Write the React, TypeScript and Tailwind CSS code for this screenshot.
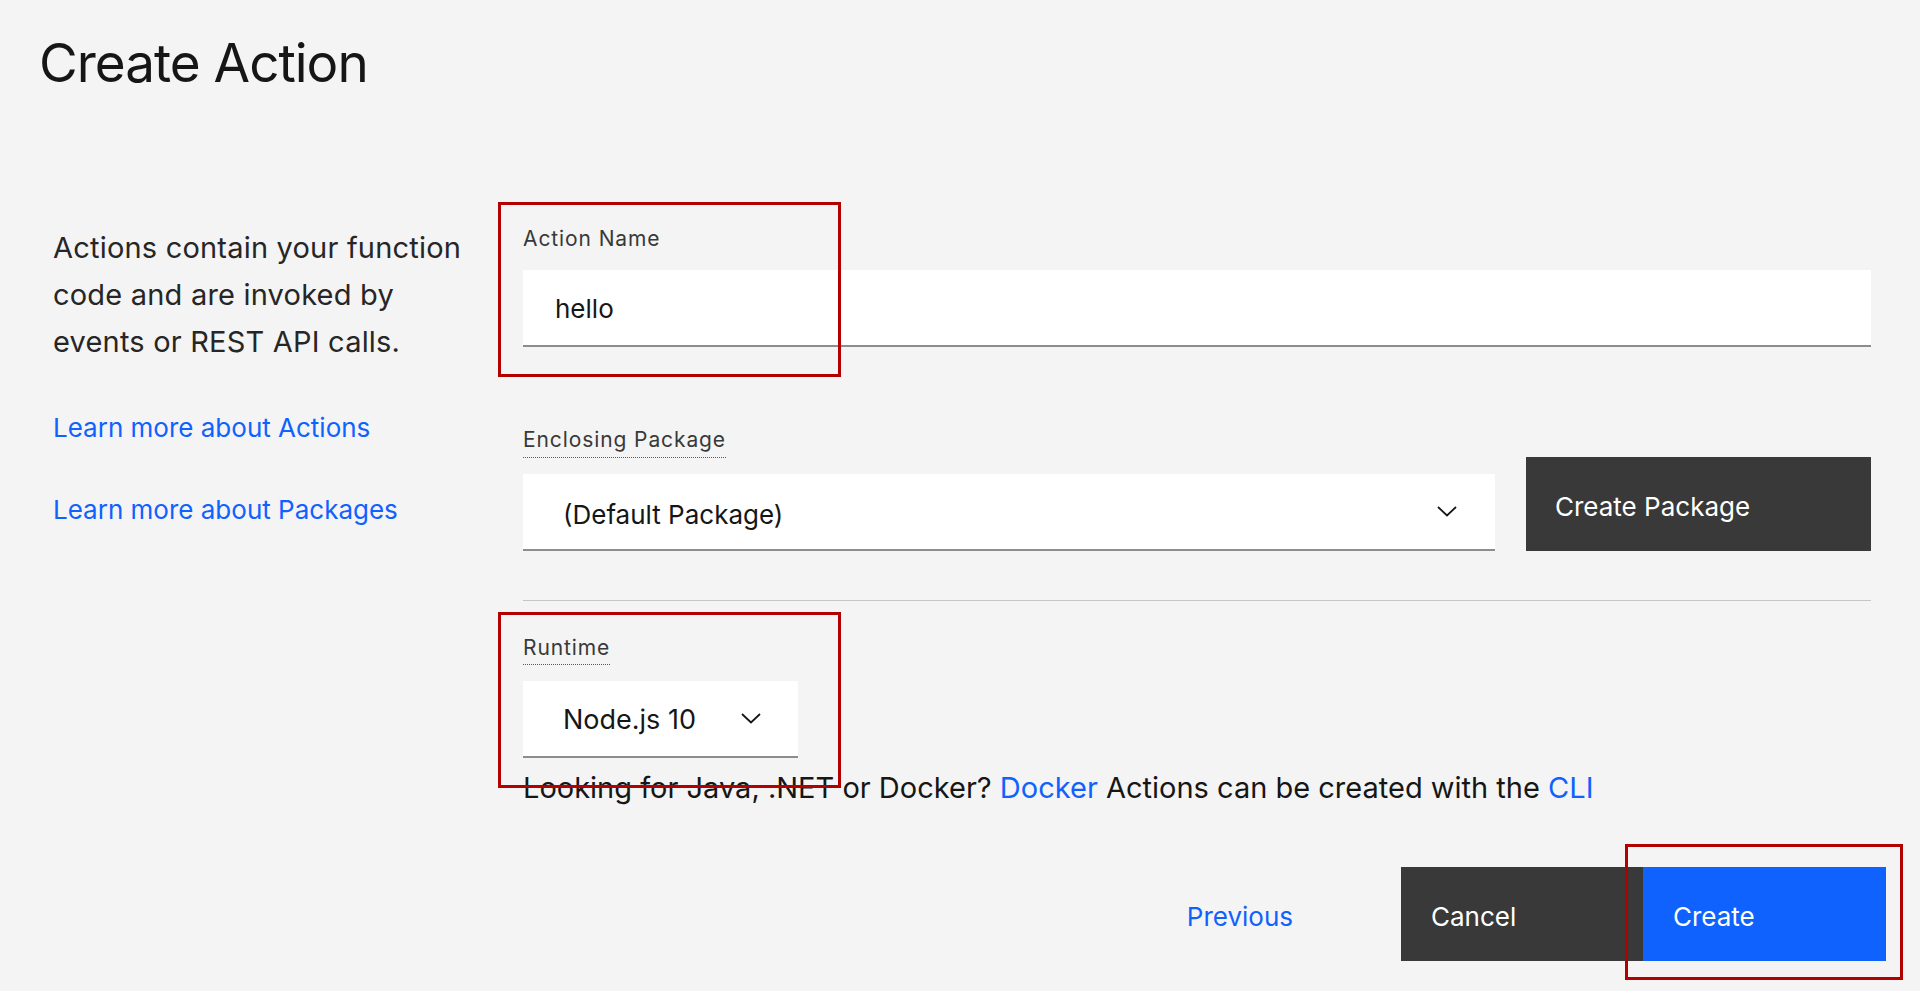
import React from "react";

const Chevron = () => (
  <svg width="20" height="11" viewBox="0 0 20 11" fill="none">
    <polyline points="1,1 10,9.5 19,1" stroke="#161616" strokeWidth="1.8" fill="none" />
  </svg>
);

export default function App() {
  return (
    <div
      className="relative w-[1920px] h-[991px] overflow-hidden bg-[#f4f4f4] text-[#161616]"
      style={{ fontFamily: "Inter, 'Noto Sans', 'Liberation Sans', sans-serif" }}
    >
      <h1 className="pt-[31px] pl-[39px] text-[53px] leading-[64px] font-normal tracking-[-1px]">
        Create Action
      </h1>

      <div className="mt-[129px] flex">
        {/* left column */}
        <div className="w-[523px] pl-[53px] shrink-0">
          <p className="text-[29px] leading-[47px] text-[#262626] tracking-[0.2px]">
            Actions contain your function
            <br />
            code and are invoked by
            <br />
            events or REST API calls.
          </p>
          <a className="mt-[47px] block text-[26px] leading-[32px] text-[#0f62fe]">
            Learn more about Actions
          </a>
          <a className="mt-[50px] block text-[26px] leading-[32px] text-[#0f62fe]">
            Learn more about Packages
          </a>
        </div>

        {/* right column */}
        <div className="w-[1348px] pt-[3px]">
          <div className="text-[21px] leading-[24px] tracking-[0.9px] text-[#393939]">Action Name</div>
          <div className="mt-[19px] h-[77px] bg-white border-b-2 border-[#8d8d8d] flex items-center pl-[32px] pt-[2px] text-[26px]">
            hello
          </div>

          <div className="mt-[81px] flex items-end gap-[31px]">
            <div className="w-[972px]">
              <span className="inline-block text-[21px] leading-[24px] tracking-[0.9px] pb-[5px] text-[#393939] border-b-[1.5px] border-dotted border-[#0f62fe]">
                Enclosing Package
              </span>
              <div className="mt-[16px] h-[77px] bg-white border-b-2 border-[#8d8d8d] flex items-center justify-between pl-[40px] pr-[38px] text-[26px]">
                <span className="pt-[5px]">(Default Package)</span>
                <Chevron />
              </div>
            </div>
            <button className="w-[345px] h-[94px] bg-[#393939] text-white text-[26px] text-left pl-[29px] pt-[4px] flex items-center">
              Create Package
            </button>
          </div>

          <div className="mt-[49px] h-px bg-[#c6c6c6]" />

          <div className="mt-[35px]">
            <span className="inline-block text-[21px] leading-[24px] tracking-[0.9px] pb-[4px] text-[#393939] border-b-[1.5px] border-dotted border-[#0f62fe]">
              Runtime
            </span>
          </div>
          <div className="mt-[16px] w-[275px] h-[77px] bg-white border-b-2 border-[#8d8d8d] flex items-center justify-between pl-[40px] pr-[37px] text-[27px]">
            <span className="pt-[4px]">Node.js 10</span>
            <Chevron />
          </div>

          <p className="mt-[14px] text-[29px] leading-[32px]">
            Looking for Java, .NET or Docker? <a className="text-[#0f62fe]">Docker</a> Actions can be created with the{" "}
            <a className="text-[#0f62fe]">CLI</a>
          </p>
        </div>
      </div>

      {/* footer buttons */}
      <div className="mt-[63px] flex justify-end pr-[34px]">
        <button className="h-[94px] px-[29px] mr-[79px] pt-[4px] text-[26px] text-[#0f62fe] flex items-center">
          Previous
        </button>
        <button className="w-[242px] h-[94px] bg-[#393939] text-white text-[26px] text-left pl-[30px] pt-[4px] flex items-center">
          Cancel
        </button>
        <button className="w-[243px] h-[94px] bg-[#0f62fe] text-white text-[26px] text-left pl-[30px] pt-[4px] flex items-center">
          Create
        </button>
      </div>

      {/* annotation boxes */}
      <div className="absolute left-[498px] top-[202px] w-[343px] h-[175px] border-[3px] border-[#b30000] pointer-events-none" />
      <div className="absolute left-[498px] top-[612px] w-[343px] h-[176px] border-[3px] border-[#b30000] pointer-events-none" />
      <div className="absolute left-[1625px] top-[844px] w-[278px] h-[136px] border-[3px] border-[#b30000] pointer-events-none" />
    </div>
  );
}
